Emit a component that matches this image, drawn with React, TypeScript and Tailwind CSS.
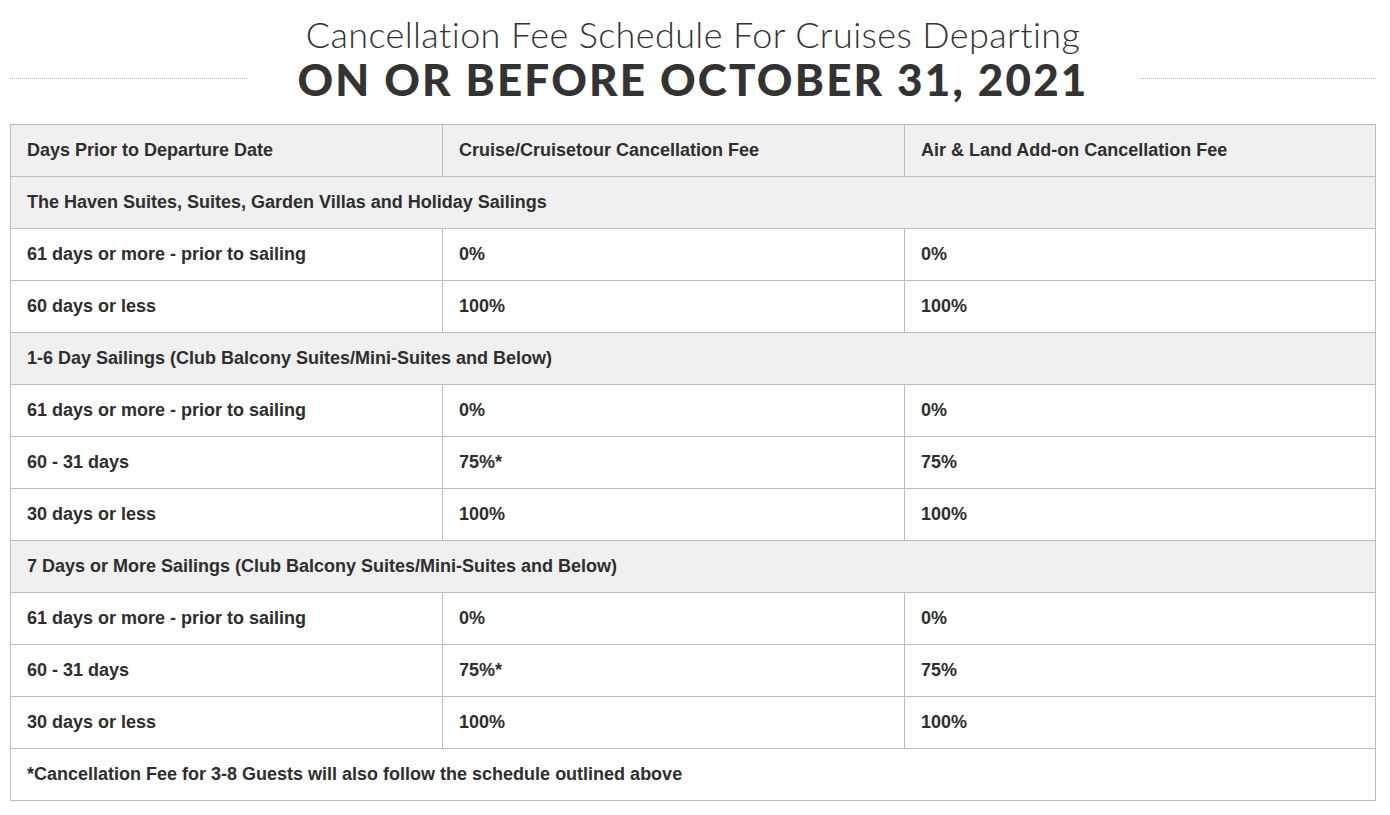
import React from 'react';

type Row =
  | { kind: 'group'; label: string }
  | { kind: 'data'; days: string; cruise: string; air: string };

const rows: Row[] = [
  { kind: 'group', label: 'The Haven Suites, Suites, Garden Villas and Holiday Sailings' },
  { kind: 'data', days: '61 days or more - prior to sailing', cruise: '0%', air: '0%' },
  { kind: 'data', days: '60 days or less', cruise: '100%', air: '100%' },
  { kind: 'group', label: '1-6 Day Sailings (Club Balcony Suites/Mini-Suites and Below)' },
  { kind: 'data', days: '61 days or more - prior to sailing', cruise: '0%', air: '0%' },
  { kind: 'data', days: '60 - 31 days', cruise: '75%*', air: '75%' },
  { kind: 'data', days: '30 days or less', cruise: '100%', air: '100%' },
  { kind: 'group', label: '7 Days or More Sailings (Club Balcony Suites/Mini-Suites and Below)' },
  { kind: 'data', days: '61 days or more - prior to sailing', cruise: '0%', air: '0%' },
  { kind: 'data', days: '60 - 31 days', cruise: '75%*', air: '75%' },
  { kind: 'data', days: '30 days or less', cruise: '100%', air: '100%' },
];

const cell = 'h-[52px] px-4 pb-[2px] align-middle border border-[#bdbdbd] text-left';

export default function App() {
  return (
    <div className="bg-white min-h-screen text-[#333]">
      <div className="ml-[10px] w-[1366px] pt-[12px]">
        {/* Heading */}
        <div className="text-center">
          <h2 className="font-['Lato'] font-light text-[36px] leading-[44px] tracking-[0.4px] text-[#333]">
            Cancellation Fee Schedule For Cruises Departing
          </h2>
          <div className="flex items-center -mt-[2px]">
            <div className="flex-1 border-t border-dotted border-[#b5b5b5] -translate-y-[1px]" />
            <h1 className="px-[50px] font-['Lato'] font-black text-[44px] leading-[50px] tracking-[2.2px] text-[#333]">
              ON OR BEFORE OCTOBER 31, 2021
            </h1>
            <div className="flex-1 border-t border-dotted border-[#b5b5b5] -translate-y-[1px]" />
          </div>
        </div>

        {/* Table */}
        <table className="mt-[20px] w-full border-collapse font-['Liberation_Sans'] text-[18px] leading-[22px] font-bold text-[#2e2e2e]">
          <colgroup>
            <col className="w-[432px]" />
            <col className="w-[462px]" />
            <col />
          </colgroup>
          <thead>
            <tr className="bg-[#f0f0f0]">
              <th className={cell}>Days Prior to Departure Date</th>
              <th className={cell}>Cruise/Cruisetour Cancellation Fee</th>
              <th className={cell}>Air &amp; Land Add-on Cancellation Fee</th>
            </tr>
          </thead>
          <tbody>
            {rows.map((r, i) =>
              r.kind === 'group' ? (
                <tr key={i} className="bg-[#f0f0f0]">
                  <td colSpan={3} className={cell}>{r.label}</td>
                </tr>
              ) : (
                <tr key={i}>
                  <td className={cell}>{r.days}</td>
                  <td className={cell}>{r.cruise}</td>
                  <td className={cell}>{r.air}</td>
                </tr>
              )
            )}
            <tr>
              <td colSpan={3} className={cell}>
                *Cancellation Fee for 3-8 Guests will also follow the schedule outlined above
              </td>
            </tr>
          </tbody>
        </table>
      </div>
    </div>
  );
}
